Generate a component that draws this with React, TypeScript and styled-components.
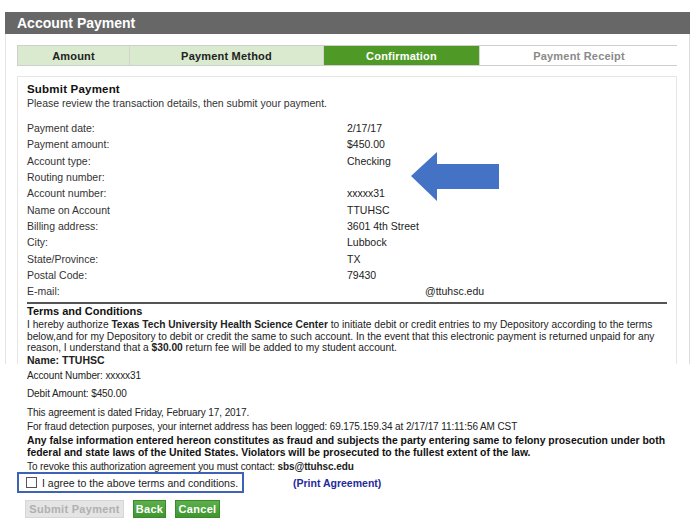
import React from "react";
import styled, { createGlobalStyle } from "styled-components";

const Global = createGlobalStyle`
  html, body { margin: 0; padding: 0; background: #fff; }
  body { font-family: "Liberation Sans", Arial, sans-serif; color: #222; }
  * { box-sizing: border-box; }
`;

const Page = styled.div`
  width: 700px;
  height: 532px;
  padding-top: 12px;
  overflow: hidden;
`;

const Panel = styled.div`
  margin-left: 5px;
  width: 685px;
`;

const Header = styled.div`
  height: 22px;
  background: #676767;
  color: #fff;
  font-weight: bold;
  font-size: 14px;
  line-height: 22px;
  padding-left: 12px;
`;

const PanelBody = styled.div`
  border-left: 1px solid #e4e4e4;
  border-right: 1px solid #dcdcdc;
  padding: 11px 12px 0 11px;
`;

const Tabs = styled.div`
  display: grid;
  grid-template-columns: 111px 194px 156px 199px;
  height: 21px;
  border: 1px solid #cfcfcf;
`;

const Tab = styled.div<{ $state: "done" | "active" | "todo" }>`
  display: flex;
  align-items: center;
  justify-content: center;
  font-weight: bold;
  font-size: 11px;
  letter-spacing: 0.2px;
  border-left: 1px solid #d4d4d4;
  &:first-child { border-left: none; }
  background: ${(p) =>
    p.$state === "done" ? "#d9eacf" : p.$state === "active" ? "#4f9a26" : "#fff"};
  color: ${(p) =>
    p.$state === "done" ? "#222" : p.$state === "active" ? "#fff" : "#8a8a8a"};
`;

const Content = styled.div`
  position: relative;
  margin-top: 10px;
  border: 1px solid #e6e6e6;
  border-bottom: none;
  padding: 5px 9px 0 9px;
  height: 288px;
`;

const Title = styled.div`
  font-weight: bold;
  font-size: 11.5px;
  line-height: 14px;
  letter-spacing: 0.2px;
  color: #111;
`;

const Desc = styled.div`
  font-size: 10.5px;
  line-height: 14px;
  color: #333;
`;

const Details = styled.div`
  margin-top: 10px;
  display: grid;
  grid-template-columns: 320px 1fr;
  grid-auto-rows: 16.3px;
  align-items: center;
  font-size: 10.5px;
`;

const Label = styled.div`
  color: #333;
`;

const Value = styled.div<{ $indent?: number }>`
  color: #222;
  padding-left: ${(p) => p.$indent ?? 0}px;
`;

const Separator = styled.hr`
  margin: 3px 0 0 0;
  border: none;
  border-top: 2px solid #555;
  height: 0;
`;

const TermsTitle = styled.div`
  font-weight: bold;
  font-size: 11px;
  line-height: 14px;
  color: #111;
`;

const TermsText = styled.div`
  margin-top: 1px;
  font-size: 10.2px;
  line-height: 11.5px;
  color: #222;
  white-space: nowrap;
`;

const NameLine = styled.div`
  font-weight: bold;
  font-size: 10.5px;
  line-height: 13px;
  color: #222;
`;

const Arrow = styled.svg`
  position: absolute;
  left: 393px;
  top: 75px;
`;

const Lower = styled.div`
  padding-left: 27px;
  margin-top: 5px;
`;

const Line = styled.div<{ $gap?: number; $lh?: number; $bold?: boolean }>`
  margin-top: ${(p) => p.$gap ?? 0}px;
  font-size: ${(p) => (p.$bold ? 10.4 : 10)}px;
  line-height: ${(p) => p.$lh ?? 14}px;
  font-weight: ${(p) => (p.$bold ? "bold" : "normal")};
  color: ${(p) => (p.$bold ? "#111" : "#222")};
  letter-spacing: ${(p) => (p.$bold ? "0" : "-0.1px")};
  white-space: nowrap;
`;

const AgreeRow = styled.div`
  display: flex;
  align-items: center;
  margin-top: -1px;
  margin-left: -10px;
`;

const AgreeBox = styled.label`
  display: flex;
  align-items: center;
  gap: 5px;
  width: 227px;
  height: 21px;
  border: 2px solid #3f63b4;
  padding-left: 7px;
  font-size: 10.5px;
  color: #222;
`;

const CheckSquare = styled.span`
  display: inline-block;
  width: 11px;
  height: 11px;
  border: 1px solid #555;
  background: #fff;
`;

const PrintLink = styled.a`
  margin-left: 49px;
  color: #1f2a9c;
  font-weight: bold;
  font-size: 10.5px;
  text-decoration: none;
`;

const Buttons = styled.div`
  display: flex;
  gap: 9px;
  margin-top: 7px;
  margin-left: -2px;
`;

const Button = styled.button<{ $disabled?: boolean; $w: number }>`
  width: ${(p) => p.$w}px;
  height: 18px;
  padding: 0;
  font-family: "Liberation Sans", Arial, sans-serif;
  font-weight: bold;
  font-size: 11px;
  letter-spacing: 0.3px;
  border: 1px solid ${(p) => (p.$disabled ? "#d6d6d6" : "#3a8a2c")};
  background: ${(p) =>
    p.$disabled ? "#e4e4e4" : "linear-gradient(#5bb04a, #3f9631)"};
  color: ${(p) => (p.$disabled ? "#b0b0b0" : "#fff")};
`;

const rows: [string, string, number?][] = [
  ["Payment date:", "2/17/17"],
  ["Payment amount:", "$450.00"],
  ["Account type:", "Checking"],
  ["Routing number:", ""],
  ["Account number:", "xxxxx31"],
  ["Name on Account", "TTUHSC"],
  ["Billing address:", "3601 4th Street"],
  ["City:", "Lubbock"],
  ["State/Province:", "TX"],
  ["Postal Code:", "79430"],
  ["E-mail:", "@ttuhsc.edu", 78],
];

export default function App() {
  return (
    <Page>
      <Global />
      <Panel>
        <Header>Account Payment</Header>
        <PanelBody>
          <Tabs>
            <Tab $state="done">Amount</Tab>
            <Tab $state="done">Payment Method</Tab>
            <Tab $state="active">Confirmation</Tab>
            <Tab $state="todo">Payment Receipt</Tab>
          </Tabs>
          <Content>
            <Title>Submit Payment</Title>
            <Desc>Please review the transaction details, then submit your payment.</Desc>
            <Details>
              {rows.map(([l, v, ind]) => (
                <React.Fragment key={l}>
                  <Label>{l}</Label>
                  <Value $indent={ind}>{v}</Value>
                </React.Fragment>
              ))}
            </Details>
            <Separator />
            <TermsTitle>Terms and Conditions</TermsTitle>
            <TermsText>
              I hereby authorize <b>Texas Tech University Health Science Center</b> to initiate
              debit or credit entries to my Depository according to the terms
              <br />
              below,and for my Depository to debit or credit the same to such account. In the
              event that this electronic payment is returned unpaid for any
              <br />
              reason, I understand that a <b>$30.00</b> return fee will be added to my student
              account.
            </TermsText>
            <NameLine>Name: TTUHSC</NameLine>
            <Arrow width="89" height="49" viewBox="0 0 89 49">
              <polygon
                points="0,24 26,0 26,12 88,12 88,37 26,37 26,49"
                fill="#4472c4"
              />
            </Arrow>
          </Content>
        </PanelBody>
      </Panel>
      <Lower>
        <Line>Account Number: xxxxx31</Line>
        <Line $gap={4}>Debit Amount: $450.00</Line>
        <Line $gap={5}>This agreement is dated Friday, February 17, 2017.</Line>
        <Line>
          For fraud detection purposes, your internet address has been logged: 69.175.159.34
          at 2/17/17 11:11:56 AM CST
        </Line>
        <Line $bold $lh={12} $gap={1}>
          Any false information entered hereon constitutes as fraud and subjects the party
          entering same to felony prosecution under both
          <br />
          federal and state laws of the United States. Violators will be prosecuted to the
          fullest extent of the law.
        </Line>
        <Line $gap={2} $lh={12}>
          To revoke this authorization agreement you must contact: <b>sbs@ttuhsc.edu</b>
        </Line>
        <AgreeRow>
          <AgreeBox>
            <CheckSquare />I agree to the above terms and conditions.
          </AgreeBox>
          <PrintLink href="#">(Print Agreement)</PrintLink>
        </AgreeRow>
        <Buttons>
          <Button $disabled $w={99}>Submit Payment</Button>
          <Button $w={33}>Back</Button>
          <Button $w={45}>Cancel</Button>
        </Buttons>
      </Lower>
    </Page>
  );
}
